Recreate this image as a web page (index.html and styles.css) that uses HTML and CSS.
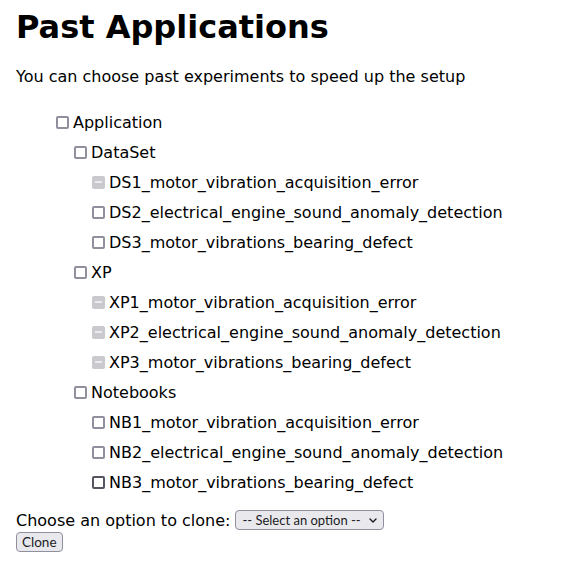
FILE: index.html
```html
<!DOCTYPE html>
<html lang="en">
<head>
<meta charset="utf-8">
<title>Past Applications</title>
<link rel="stylesheet" href="styles.css">
</head>
<body>
<h1 class="title">Past Applications</h1>
<p class="intro">You can choose past experiments to speed up the setup</p>
<ul class="tree">
  <li>
    <label class="row"><input type="checkbox" class="box">Application</label>
    <ul class="tree-sub">
      <li>
        <label class="row"><input type="checkbox" class="box">DataSet</label>
        <ul class="tree-sub">
          <li><label class="row"><input type="checkbox" class="box partial" disabled>DS1_motor_vibration_acquisition_error</label></li>
          <li><label class="row"><input type="checkbox" class="box">DS2_electrical_engine_sound_anomaly_detection</label></li>
          <li><label class="row"><input type="checkbox" class="box">DS3_motor_vibrations_bearing_defect</label></li>
        </ul>
      </li>
      <li>
        <label class="row"><input type="checkbox" class="box">XP</label>
        <ul class="tree-sub">
          <li><label class="row"><input type="checkbox" class="box partial" disabled>XP1_motor_vibration_acquisition_error</label></li>
          <li><label class="row"><input type="checkbox" class="box partial" disabled>XP2_electrical_engine_sound_anomaly_detection</label></li>
          <li><label class="row"><input type="checkbox" class="box partial" disabled>XP3_motor_vibrations_bearing_defect</label></li>
        </ul>
      </li>
      <li>
        <label class="row"><input type="checkbox" class="box">Notebooks</label>
        <ul class="tree-sub">
          <li><label class="row"><input type="checkbox" class="box">NB1_motor_vibration_acquisition_error</label></li>
          <li><label class="row"><input type="checkbox" class="box">NB2_electrical_engine_sound_anomaly_detection</label></li>
          <li><label class="row"><input type="checkbox" class="box hover">NB3_motor_vibrations_bearing_defect</label></li>
        </ul>
      </li>
    </ul>
  </li>
</ul>
<div class="clone">
  <label for="clone-select">Choose an option to clone:</label>
  <span class="select-wrap">
    <select id="clone-select" class="select">
      <option>-- Select an option --</option>
    </select>
    <svg class="chevron" width="8" height="5" viewBox="0 0 8 5" aria-hidden="true"><path d="M1 1 L4 4 L7 1" fill="none" stroke="#1b1b1f" stroke-width="1.4" stroke-linecap="round" stroke-linejoin="round"/></svg>
  </span>
</div>
<button class="clone-btn" type="button">Clone</button>
</body>
</html>
```

FILE: styles.css
```css
body {
  margin: 8px 16px;
  font-family: "DejaVu Sans", sans-serif;
  font-size: 16px;
  color: #000;
  background: #fff;
}
.title {
  margin: 0 0 21px;
  font-size: 32px;
  font-weight: bold;
}
.intro {
  margin: 0 0 21px;
}
.tree {
  list-style: none;
  margin: 0;
  padding: 0 0 0 40px;
}
.tree-sub {
  list-style: none;
  margin: 0;
  padding: 0 0 0 18px;
}
.row {
  display: flex;
  align-items: center;
  height: 30px;
}
.box {
  appearance: none;
  -webkit-appearance: none;
  box-sizing: border-box;
  margin: 0 4px 0 0;
  width: 13px;
  height: 13px;
  border: 2px solid #8f8f9d;
  border-radius: 2px;
  background: #fff;
  flex: none;
}
.box.partial {
  border-color: #c9c9ce;
  background: linear-gradient(#ececf0, #ececf0) center / 7px 2px no-repeat, #c9c9ce;
}
.box.hover {
  border-color: #55555f;
}
.clone {
  margin-top: 13px;
  display: flex;
  align-items: center;
  gap: 5px;
  height: 20px;
}
.select-wrap {
  position: relative;
  display: inline-flex;
}
.select {
  appearance: none;
  -webkit-appearance: none;
  box-sizing: border-box;
  width: 149px;
  height: 20px;
  margin: 0;
  padding: 0 0 0 6px;
  font-family: Lato, "DejaVu Sans", sans-serif;
  font-size: 13px;
  color: #1b1b1f;
  background: #e9e9ed;
  border: 1px solid #8f8f9d;
  border-radius: 4px;
}
.chevron {
  position: absolute;
  right: 7px;
  top: 8px;
  pointer-events: none;
}
.clone-btn {
  box-sizing: border-box;
  margin-top: 2px;
  height: 20px;
  padding: 0 5px;
  font-family: Lato, "DejaVu Sans", sans-serif;
  font-size: 13.5px;
  color: #1b1b1f;
  background: #e9e9ed;
  border: 1px solid #8f8f9d;
  border-radius: 4px;
}
```
